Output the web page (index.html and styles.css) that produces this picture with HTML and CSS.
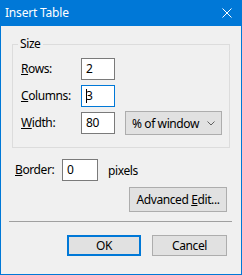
FILE: index.html
```html
<!DOCTYPE html>
<html lang="en">

<head>
    <meta charset="UTF-8">
    <title>Insert Table</title>
    <link rel="stylesheet" href="styles.css">
</head>

<body>
    <div class="dialog">
        <div class="titlebar">
            <span class="title">Insert Table</span>
            <svg class="close" width="10" height="10" viewBox="0 0 10 10">
                <path d="M0.5 0.5L9.5 9.5M9.5 0.5L0.5 9.5" stroke="#fff" stroke-width="1" fill="none"/>
            </svg>
        </div>

        <div class="content">
            <fieldset class="group">
                <legend>Size</legend>
                <div class="grid">
                    <span class="label"><u>R</u>ows:</span>
                    <span class="field">2</span>
                    <span></span>

                    <span class="label"><u>C</u>olumns:</span>
                    <span class="field focus"><span class="caret"></span>3</span>
                    <span></span>

                    <span class="label"><u>W</u>idth:</span>
                    <span class="field">80</span>
                    <span class="select">
                        <span>% of window</span>
                        <svg width="8" height="5" viewBox="0 0 8 5">
                            <path d="M0.5 0.5L4 4L7.5 0.5" stroke="#606060" fill="none"/>
                        </svg>
                    </span>
                </div>
            </fieldset>

            <div class="border-row">
                <span class="label"><u>B</u>order:</span>
                <span class="field wide">0</span>
                <span class="unit">pixels</span>
            </div>

            <div class="advanced">
                <span class="button adv"><span>Advanced <u>E</u>dit...</span></span>
            </div>

            <hr class="separator">

            <div class="actions">
                <span class="button default">OK</span>
                <span class="button">Cancel</span>
            </div>
        </div>
    </div>
</body>

</html>
```

FILE: styles.css
```css
html,
body {
    margin: 0;
    padding: 0;
}

body {
    font-family: "Noto Sans", "Open Sans", sans-serif;
    font-size: 12px;
    letter-spacing: -0.4px;
    color: #000;
    background: #f0f0f0;
}

.dialog {
    width: 242px;
    height: 275px;
    display: flex;
    flex-direction: column;
    background: #f0f0f0;
}

.titlebar {
    height: 26px;
    flex: none;
    background: #0078d7;
    color: #fff;
    display: flex;
    align-items: center;
    justify-content: space-between;
    padding: 0 10px 0 5px;
}

.title {
    line-height: 16px;
    letter-spacing: -0.2px;
}

.content {
    flex: 1;
    border: 1px solid #0078d7;
    border-top: 0;
    padding: 10px 11px 0 11px;
    display: flex;
    flex-direction: column;
}

.group {
    margin: 0;
    padding: 6px 0 13px 8px;
    border: 1px solid #dcdcdc;
}

.group legend {
    padding: 0 2px;
    margin-left: -3px;
    line-height: 16px;
}

.grid {
    display: grid;
    grid-template-columns: 60px 34px auto;
    grid-auto-rows: 22px;
    row-gap: 5px;
    align-items: center;
    justify-content: start;
}

.label {
    line-height: 16px;
}

.field {
    box-sizing: border-box;
    height: 22px;
    border: 1px solid #7a7a7a;
    background: #fff;
    padding: 0 4px;
    line-height: 20px;
    display: flex;
    align-items: center;
}

.field.focus {
    border-color: #0078d7;
}

.caret {
    width: 1px;
    height: 14px;
    background: #000;
    margin-right: -1px;
}

.select {
    box-sizing: border-box;
    width: 97px;
    height: 24px;
    margin-left: 10px;
    border: 1px solid #adadad;
    background: #e1e1e1;
    padding: 0 6px 0 6px;
    display: flex;
    align-items: center;
    justify-content: space-between;
}

.border-row {
    display: flex;
    align-items: center;
    margin-top: 11px;
    padding-left: 3px;
}

.border-row .label {
    width: 47px;
}

.field.wide {
    width: 36px;
}

.unit {
    margin-left: 10px;
}

.advanced {
    display: flex;
    justify-content: flex-end;
    margin-top: 6px;
    padding-right: 3px;
}

.button {
    box-sizing: border-box;
    height: 21px;
    width: 75px;
    border: 1px solid #adadad;
    background: #e1e1e1;
    display: flex;
    align-items: center;
    justify-content: center;
}

.button.adv {
    width: 98px;
    height: 25px;
}

.button.default {
    width: 74px;
    border: 2px solid #0078d7;
}

.separator {
    margin: 9px -2px 0 -3px;
    border: 0;
    border-top: 1px solid #a0a0a0;
    height: 0;
}

.actions {
    display: flex;
    justify-content: flex-end;
    gap: 11px;
    margin-top: 13px;
    padding-right: 3px;
}
```
